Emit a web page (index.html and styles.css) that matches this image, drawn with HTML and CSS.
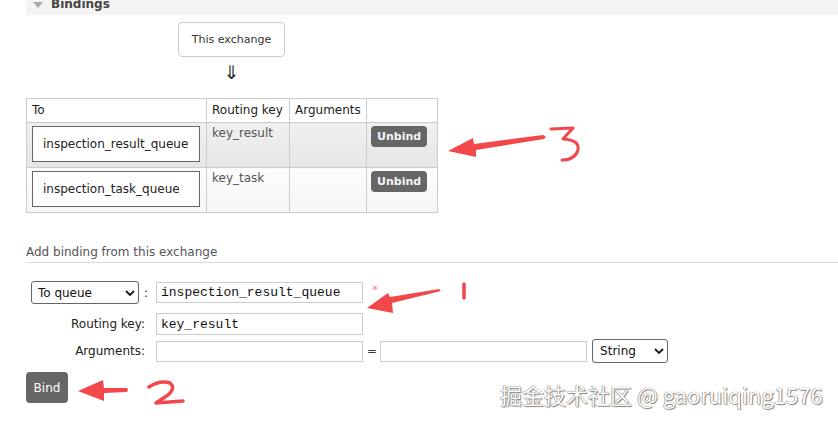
FILE: index.html
```html
<!DOCTYPE html>
<html>
<head>
<meta charset="utf-8">
<link rel="stylesheet" href="styles.css">
</head>
<body>
<div class="page">
  <div class="section-head"><span class="tri"></span><span class="title">Bindings</span></div>
  <div class="content">
    <div class="diagram">
      <div class="exchange-box">This exchange</div>
      <div class="darr">&#8659;</div>
    </div>
    <table class="bindings">
      <colgroup><col class="c1"><col class="c2"><col class="c3"><col class="c4"></colgroup>
      <thead>
        <tr><th>To</th><th>Routing key</th><th>Arguments</th><th></th></tr>
      </thead>
      <tbody>
        <tr class="alt1">
          <td><div class="qbox">inspection_result_queue</div></td>
          <td class="rk">key_result</td>
          <td></td>
          <td class="act"><button class="btn-sm">Unbind</button></td>
        </tr>
        <tr class="alt2">
          <td><div class="qbox">inspection_task_queue</div></td>
          <td class="rk">key_task</td>
          <td></td>
          <td class="act"><button class="btn-sm">Unbind</button></td>
        </tr>
      </tbody>
    </table>
    <h3 class="sub">Add binding from this exchange</h3>
    <form class="bind-form">
      <div class="frow r1">
        <div class="lbl">
          <span class="sel-wrap dest"><select class="sel"><option>To queue</option></select><svg class="chev" width="10" height="6" viewBox="0 0 10 6"><path d="M1 1l4 4 4-4" fill="none" stroke="#1a1a1a" stroke-width="1.8"/></svg></span><span class="colon">:</span>
        </div>
        <input class="txt" type="text" value="inspection_result_queue">
        <span class="mand">*</span>
      </div>
      <div class="frow r2">
        <div class="lbl">Routing key:</div>
        <input class="txt h22" type="text" value="key_result">
      </div>
      <div class="frow r3">
        <div class="lbl">Arguments:</div>
        <input class="txt" type="text" value="">
        <span class="eq">=</span>
        <input class="txt" type="text" value="">
        <span class="sel-wrap typ"><select class="sel"><option>String</option></select><svg class="chev" width="10" height="6" viewBox="0 0 10 6"><path d="M1 1l4 4 4-4" fill="none" stroke="#1a1a1a" stroke-width="1.8"/></svg></span>
      </div>
      <button type="button" class="btn">Bind</button>
    </form>
  </div>
  <svg class="annot" width="838" height="423" viewBox="0 0 838 423">
    <g fill="#f2484c">
      <polygon points="448,151 473,138 474,144 543,135 546,137 544,139 476,150 476,157"/>
      <polygon points="367,308 388,293 390,297 439,289 441,291 392,303 393,313"/>
      <polygon points="78,391 103,380 104,388 127,388 128,390 127,392 104,393 104,401"/>
    </g>
    <g fill="none" stroke="#f2484c" stroke-linecap="round" stroke-linejoin="round">
      <path d="M551,129 L573,128 L563,139 Q580,140 578,150 Q575,160 562,160" stroke-width="3"/>
      <path d="M464,284 L464,298" stroke-width="3.5"/>
      <path d="M149,387 Q160,380 170,383 Q176,388 168,395 L156,403 L183,401" stroke-width="3.5"/>
    </g>
  </svg>
  <div class="watermark">掘金技术社区 @ gaoruiqing1576</div>
</div>
</body>
</html>
```

FILE: styles.css
```css
html, body {
  margin: 0;
  padding: 0;
  background: #fff;
}
.page {
  position: relative;
  width: 838px;
  height: 423px;
  overflow: hidden;
  font-family: "DejaVu Sans", Verdana, sans-serif;
  font-size: 12px;
  color: #333;
}
.section-head {
  margin-left: 26px;
  height: 15px;
  background: #f4f4f4;
  display: flex;
  align-items: flex-start;
  overflow: hidden;
}
.tri {
  width: 0;
  height: 0;
  margin: 2px 0 0 7px;
  border-left: 5px solid transparent;
  border-right: 5px solid transparent;
  border-top: 6px solid #aaa;
}
.title {
  margin-left: 8px;
  font-weight: bold;
  color: #444;
  line-height: 8px;
}
.content {
  padding-left: 26px;
}
.diagram {
  display: inline-flex;
  flex-direction: column;
  align-items: center;
  margin-left: 152px;
  margin-top: 7px;
}
.exchange-box {
  box-sizing: border-box;
  width: 107px;
  height: 35px;
  border: 1px solid #ccc;
  border-radius: 4px;
  display: flex;
  align-items: center;
  justify-content: center;
  font-size: 11px;
  color: #333;
}
.darr {
  font-size: 19px;
  line-height: 24px;
  height: 24px;
  margin-top: 3px;
  color: #222;
}
.bindings {
  display: table;
  margin-top: 14px;
  border-collapse: collapse;
  table-layout: fixed;
  width: 411px;
}
.c1 { width: 180px; }
.c2 { width: 83px; }
.c3 { width: 77px; }
.c4 { width: 71px; }
.bindings th, .bindings td {
  border: 1px solid #ccc;
  padding: 3px 5px 5px 5px;
  text-align: left;
  vertical-align: top;
  line-height: 14px;
}
.bindings td.act {
  padding-left: 4px;
}
.bindings th {
  font-weight: normal;
  color: #222;
  padding: 4px 5px 5px 5px;
  background: #fff;
}
.alt1 td {
  background: linear-gradient(#f0f0f0, #e6e6e6);
}
.alt2 td {
  background: linear-gradient(#fdfdfd, #f5f5f5);
}
.qbox {
  box-sizing: border-box;
  width: 168px;
  height: 36px;
  border: 1px solid #666;
  background: #fff;
  padding-left: 10px;
  display: flex;
  align-items: center;
  color: #222;
}
.rk {
  color: #555;
}
.btn-sm {
  display: block;
  box-sizing: border-box;
  height: 21px;
  padding: 0 6px;
  border: none;
  border-radius: 4px;
  background: #666;
  color: #f4f4f4;
  font-family: "DejaVu Sans", Verdana, sans-serif;
  font-weight: bold;
  font-size: 11px;
  line-height: 21px;
  margin-top: 0;
}
.sub {
  margin: 32px 0 0 0;
  padding-bottom: 3px;
  border-bottom: 1px solid #ddd;
  font-size: 12px;
  font-weight: normal;
  line-height: 14px;
  color: #555;
}
.bind-form {
  margin: 0;
}
.frow {
  display: flex;
  align-items: center;
}
.r1 { margin-top: 18px; height: 23px; }
.r2 { margin-top: 9px; height: 22px; }
.r3 { margin-top: 4px; height: 24px; }
.lbl {
  box-sizing: border-box;
  width: 130px;
  padding-right: 11px;
  display: flex;
  justify-content: flex-end;
  align-items: center;
  color: #222;
}
.r1 .lbl {
  padding-right: 8px;
}
.colon {
  margin-left: 5px;
}
.sel-wrap {
  position: relative;
  display: inline-block;
}
.sel {
  -webkit-appearance: none;
  appearance: none;
  box-sizing: border-box;
  border: 1px solid #666;
  border-radius: 3px;
  background: #fff;
  font-family: "DejaVu Sans", Verdana, sans-serif;
  font-size: 12px;
  color: #111;
  padding: 0 0 0 6px;
  margin: 0;
  display: block;
}
.dest .sel { width: 108px; height: 23px; }
.typ { margin-left: 5px; }
.typ .sel { width: 76px; height: 24px; padding-left: 7px; }
.chev {
  position: absolute;
  right: 4px;
  top: 50%;
  margin-top: -3px;
}
.txt {
  box-sizing: border-box;
  width: 207px;
  height: 21px;
  border: 1px solid #ccc;
  padding: 0 4px;
  margin: 0;
  font-family: "Liberation Mono", "Courier New", monospace;
  font-size: 13px;
  color: #111;
  background: #fff;
  outline: none;
}
.txt.h22 { height: 22px; }
.mand {
  color: #f08aa0;
  margin-left: 9px;
  align-self: flex-start;
  margin-top: 2px;
  font-size: 12px;
}
.eq {
  margin: 0 3px 0 4px;
  color: #333;
}
.btn {
  display: block;
  margin-top: 9px;
  box-sizing: border-box;
  width: 42px;
  height: 31px;
  border: none;
  border-radius: 4px;
  background: #666;
  color: #fff;
  font-family: "DejaVu Sans", Verdana, sans-serif;
  font-size: 12px;
  padding: 0;
}
.annot {
  position: absolute;
  left: 0;
  top: 0;
  pointer-events: none;
}
.watermark {
  position: absolute;
  left: 500px;
  top: 381px;
  font-family: "Noto Sans CJK SC", "Noto Sans", sans-serif;
  font-size: 22px;
  line-height: 27px;
  color: #fff;
  white-space: nowrap;
  text-shadow: 0 0 1px #666, 1px 1px 1px #888, -0.5px -0.5px 0.5px #999;
}
```
